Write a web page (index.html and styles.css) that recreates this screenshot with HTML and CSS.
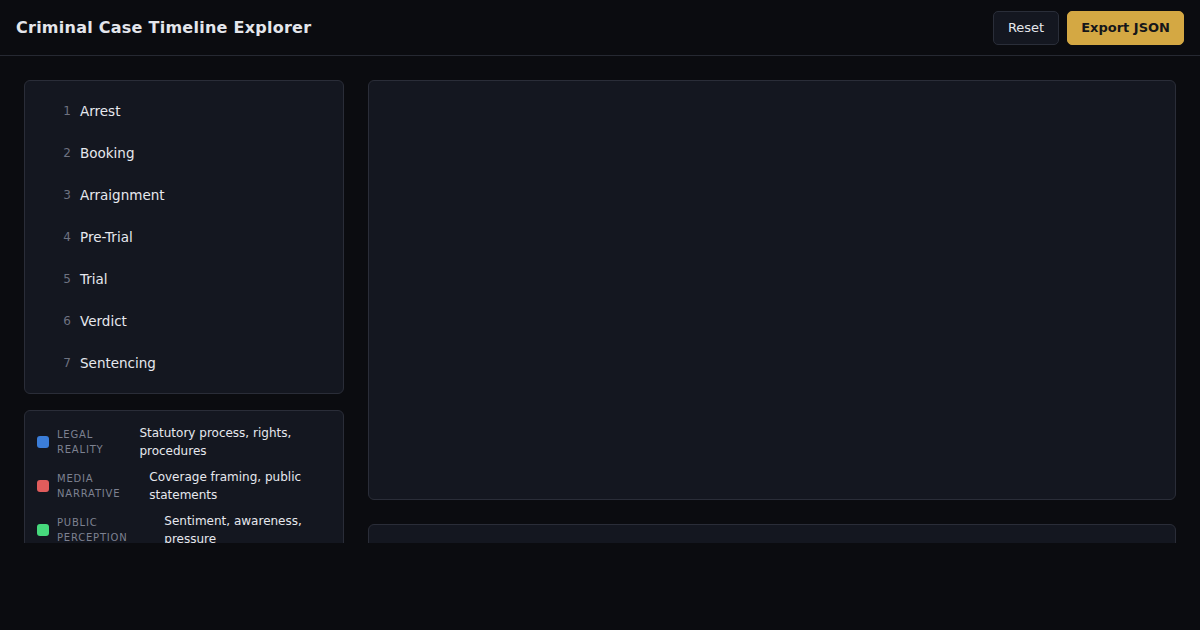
FILE: index.html
```html
<!DOCTYPE html>
<html>
<head>
<meta charset="utf-8">
<title>Criminal Case Timeline Explorer</title>
<link rel="stylesheet" href="styles.css">
</head>
<body>
<header class="topbar">
  <h1 class="title">Criminal Case Timeline Explorer</h1>
  <div class="actions">
    <button class="btn btn-ghost">Reset</button>
    <button class="btn btn-primary">Export JSON</button>
  </div>
</header>
<main class="main">
  <aside class="sidebar">
    <ol class="panel stages">
      <li class="stage"><span class="num">1</span><span class="label">Arrest</span></li>
      <li class="stage"><span class="num">2</span><span class="label">Booking</span></li>
      <li class="stage"><span class="num">3</span><span class="label">Arraignment</span></li>
      <li class="stage"><span class="num">4</span><span class="label">Pre-Trial</span></li>
      <li class="stage"><span class="num">5</span><span class="label">Trial</span></li>
      <li class="stage"><span class="num">6</span><span class="label">Verdict</span></li>
      <li class="stage"><span class="num">7</span><span class="label">Sentencing</span></li>
    </ol>
    <div class="panel legend">
      <div class="legend-row"><span class="dot dot-blue"></span><span class="legend-key">Legal Reality</span><span class="legend-desc">Statutory process, rights, procedures</span></div>
      <div class="legend-row"><span class="dot dot-red"></span><span class="legend-key">Media Narrative</span><span class="legend-desc">Coverage framing, public statements</span></div>
      <div class="legend-row"><span class="dot dot-green"></span><span class="legend-key">Public Perception</span><span class="legend-desc">Sentiment, awareness, pressure</span></div>
    </div>
  </aside>
  <section class="content">
    <div class="panel viz"></div>
    <div class="panel detail"></div>
  </section>
</main>
</body>
</html>
```

FILE: styles.css
```css
* { box-sizing: border-box; }
html, body { margin: 0; padding: 0; }
body {
  background: #0b0c10;
  color: #e6e8ee;
  font-family: "DejaVu Sans", sans-serif;
  width: 1200px;
  height: 630px;
  overflow: hidden;
}
.topbar {
  height: 56px;
  display: flex;
  align-items: center;
  justify-content: space-between;
  padding: 0 16px;
  border-bottom: 1px solid #262932;
}
.title {
  margin: 0;
  font-size: 16px;
  font-weight: 700;
  color: #e4e6ec;
  letter-spacing: 0.25px;
}
.actions { display: flex; gap: 8px; }
.btn {
  font-family: "DejaVu Sans", sans-serif;
  font-size: 13px;
  height: 34px;
  padding: 0 14px;
  border-radius: 5px;
  cursor: pointer;
}
.btn-ghost {
  background: #141720;
  color: #e4e6ec;
  border: 1px solid #2a2e39;
}
.btn-primary {
  background: #d4a843;
  color: #15161a;
  border: 1px solid #d4a843;
  font-weight: 700;
  padding: 0 13px;
}
.main {
  height: 487px;
  overflow: hidden;
  padding: 24px;
  display: flex;
  gap: 24px;
  align-items: flex-start;
}
.sidebar {
  width: 320px;
  flex: none;
  display: flex;
  flex-direction: column;
  gap: 16px;
}
.panel {
  background: #141720;
  border: 1px solid #2a2d38;
  border-radius: 6px;
}
.stages {
  list-style: none;
  margin: 0;
  padding: 9px 0;
}
.stage {
  height: 42px;
  display: flex;
  align-items: center;
  padding-left: 32px;
  gap: 9px;
}
.num {
  width: 14px;
  text-align: right;
  font-size: 12px;
  color: #6e7280;
}
.label {
  font-size: 13.5px;
  color: #e6e8ee;
}
.legend {
  padding: 13px 12px;
  display: flex;
  flex-direction: column;
  gap: 8px;
  height: 200px;
}
.legend-row {
  display: flex;
  align-items: center;
  gap: 8px;
}
.dot {
  width: 12px;
  height: 12px;
  border-radius: 3px;
  flex: none;
}
.dot-blue { background: #3b7dd8; }
.dot-red { background: #e05c5c; }
.dot-green { background: #46d97c; }
.legend-key {
  font-size: 10px;
  letter-spacing: 0.8px;
  text-transform: uppercase;
  color: #7d8190;
  line-height: 15px;
}
.legend-desc {
  font-size: 12px;
  line-height: 18px;
  color: #e6e8ee;
  margin-left: auto;
}
.content {
  flex: 1;
  display: flex;
  flex-direction: column;
  gap: 24px;
}
.viz { height: 420px; }
.detail { height: 200px; }
```
